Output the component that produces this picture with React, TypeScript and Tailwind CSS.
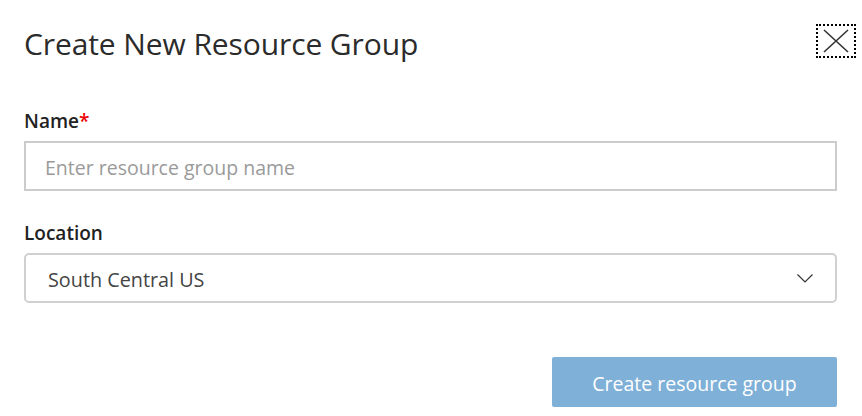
import React from 'react';

const CloseIcon = () => (
  <svg width="26" height="24" viewBox="0 0 26 24" fill="none">
    <path d="M1 1L25 23M25 1L1 23" stroke="#333" strokeWidth="1.6" />
  </svg>
);

const ChevronDown = () => (
  <svg width="16" height="9" viewBox="0 0 16 9" fill="none">
    <path d="M0.5 0.5L8 8L15.5 0.5" stroke="#333" strokeWidth="1.2" />
  </svg>
);

export default function App() {
  return (
    <div className="w-[862px] h-[416px] bg-white pl-6 pr-[25px] text-[#333] font-['Open_Sans',sans-serif] overflow-hidden">
      {/* header */}
      <div className="flex items-start justify-between pt-[24px]">
        <h1 className="text-[30px] leading-[44px] font-normal text-[#2b2b2b] -mt-[2px] tracking-[-0.1px]">Create New Resource Group</h1>
        <button className="mr-[-19px] w-[40px] h-[34px] flex items-center justify-center border-2 border-dotted border-black">
          <CloseIcon />
        </button>
      </div>

      {/* name */}
      <div className="mt-[43px]">
        <label className="block text-[19px] leading-[24px] font-semibold text-[#222]">
          Name<span className="text-[#e00]">*</span>
        </label>
        <input
          className="mt-[8px] w-full h-[50px] border-2 border-[#ccc] px-[19px] pt-[3px] text-[19.5px] placeholder:text-[#9a9a9a] outline-none"
          placeholder="Enter resource group name"
        />
      </div>

      {/* location */}
      <div className="mt-[30px]">
        <label className="block text-[19px] leading-[24px] font-semibold text-[#222]">Location</label>
        <div className="mt-[8px] w-full h-[50px] border-2 border-[#d0d0d0] rounded-[5px] pl-[22px] pr-[22px] flex items-center justify-between text-[19.8px] text-[#444]">
          <span className="pt-[4px]">South Central US</span>
          <ChevronDown />
        </div>
      </div>

      {/* footer */}
      <div className="flex justify-end mt-[54px]">
        <button className="w-[285px] h-[50px] rounded-[2px] bg-[#7fb0d8] text-white text-[19.5px] pt-[3px]">
          Create resource group
        </button>
      </div>
    </div>
  );
}
